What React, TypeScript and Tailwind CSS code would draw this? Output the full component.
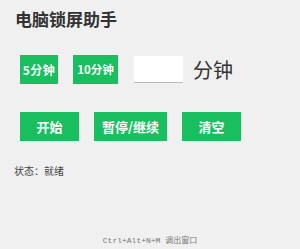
export default function App() {
  const green = "bg-[#19bf5e]";
  return (
    <main
      className="w-[300px] h-[249px] bg-[#f0f0f0] flex flex-col overflow-hidden"
      style={{ fontFamily: '"Noto Sans CJK SC", "Liberation Sans", sans-serif' }}
    >
      <h1 className="mt-[7px] ml-[15px] text-[17px] leading-[24px] font-bold text-[#333]">电脑锁屏助手</h1>

      {/* quick presets */}
      <div className="mt-[24px] ml-[20px] flex items-center">
        <button className={`${green} w-[38px] h-[29px] text-white text-[12px] tracking-[0.5px] font-bold leading-none`}>5分钟</button>
        <button className={`${green} ml-[15px] w-[45px] h-[29px] text-white text-[11.5px] font-bold leading-none`}>10分钟</button>
        <input className="ml-[16px] w-[49px] h-[27px] bg-white border-b border-[#bbb] outline-none" />
        <span className="ml-[10px] text-[20px] leading-none text-[#333]">分钟</span>
      </div>

      {/* controls */}
      <div className="mt-[28px] ml-[20px] flex gap-[15px]">
        <button className={`${green} w-[59px] h-[29px] text-white text-[13px] font-bold`}>开始</button>
        <button className={`${green} w-[73px] h-[29px] text-white text-[13px] font-bold`}>暂停/继续</button>
        <button className={`${green} w-[59px] h-[29px] text-white text-[13px] font-bold`}>清空</button>
      </div>

      <p className="mt-[23px] ml-[14px] text-[10px] leading-[14px] text-[#444]">状态：就绪</p>

      <p
        className="mt-auto mb-[2px] text-center text-[8px] leading-[12px] text-[#777]"
        style={{ fontFamily: '"Liberation Mono", "Noto Sans CJK SC", monospace' }}
      >
        Ctrl+Alt+N+M 调出窗口
      </p>
    </main>
  );
}
